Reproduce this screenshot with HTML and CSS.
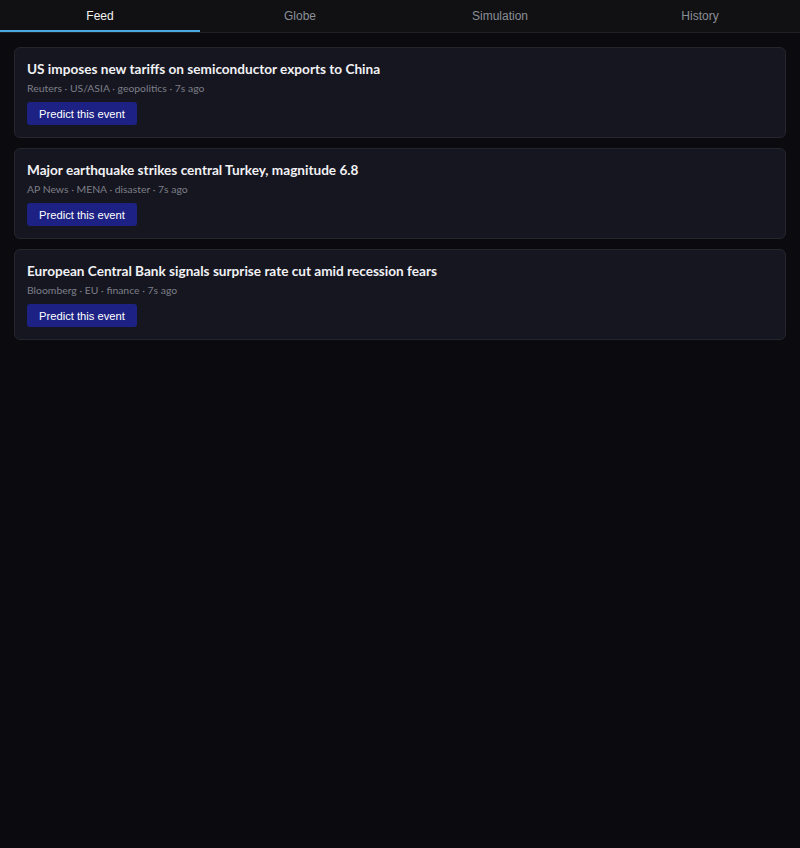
FILE: index.html
```html
<!DOCTYPE html>
<html>
<head>
<meta charset="utf-8">
<link rel="stylesheet" href="styles.css">
</head>
<body>
<nav class="tabs">
  <div class="tab active">Feed</div>
  <div class="tab">Globe</div>
  <div class="tab">Simulation</div>
  <div class="tab">History</div>
</nav>
<main class="feed">
  <article class="card">
    <h2 class="title">US imposes new tariffs on semiconductor exports to China</h2>
    <div class="meta">Reuters · US/ASIA · geopolitics · 7s ago</div>
    <button class="predict">Predict this event</button>
  </article>
  <article class="card">
    <h2 class="title">Major earthquake strikes central Turkey, magnitude 6.8</h2>
    <div class="meta">AP News · MENA · disaster · 7s ago</div>
    <button class="predict">Predict this event</button>
  </article>
  <article class="card">
    <h2 class="title">European Central Bank signals surprise rate cut amid recession fears</h2>
    <div class="meta">Bloomberg · EU · finance · 7s ago</div>
    <button class="predict">Predict this event</button>
  </article>
</main>
</body>
</html>
```

FILE: styles.css
```css
html, body {
  margin: 0;
  padding: 0;
  background: #0b0b0f;
  min-height: 100%;
}
body {
  font-family: Lato, "Noto Sans", sans-serif;
  color: #e8e8ee;
}
.tabs {
  display: flex;
  background: #111113;
  border-bottom: 1px solid #222226;
}
.tab {
  flex: 1;
  height: 32px;
  line-height: 33px;
  text-align: center;
  font-family: "Liberation Sans", Arial, sans-serif;
  font-size: 12px;
  color: #8a8f96;
  box-sizing: border-box;
}
.tab.active {
  color: #f2f2f2;
  border-bottom: 2px solid #4aa8e0;
  line-height: 32px;
}
.feed {
  display: flex;
  flex-direction: column;
  gap: 10px;
  padding: 14px 14px;
}
.card {
  background: #161620;
  border: 1px solid #25252e;
  border-radius: 6px;
  padding: 11px 12px 12px;
  display: flex;
  flex-direction: column;
  align-items: flex-start;
}
.title {
  margin: 0 0 1px;
  font-size: 13.6px;
  font-weight: 700;
  line-height: 20px;
  color: #f1f1f4;
}
.meta {
  font-size: 10.4px;
  line-height: 16px;
  color: #7d7f88;
  margin-bottom: 6px;
}
.predict {
  font-family: "Liberation Sans", Arial, sans-serif;
  font-size: 11.2px;
  color: #ffffff;
  background: #1c2183;
  border: none;
  border-radius: 3px;
  height: 23px;
  width: 110px;
  padding: 0;
  cursor: pointer;
}
```
